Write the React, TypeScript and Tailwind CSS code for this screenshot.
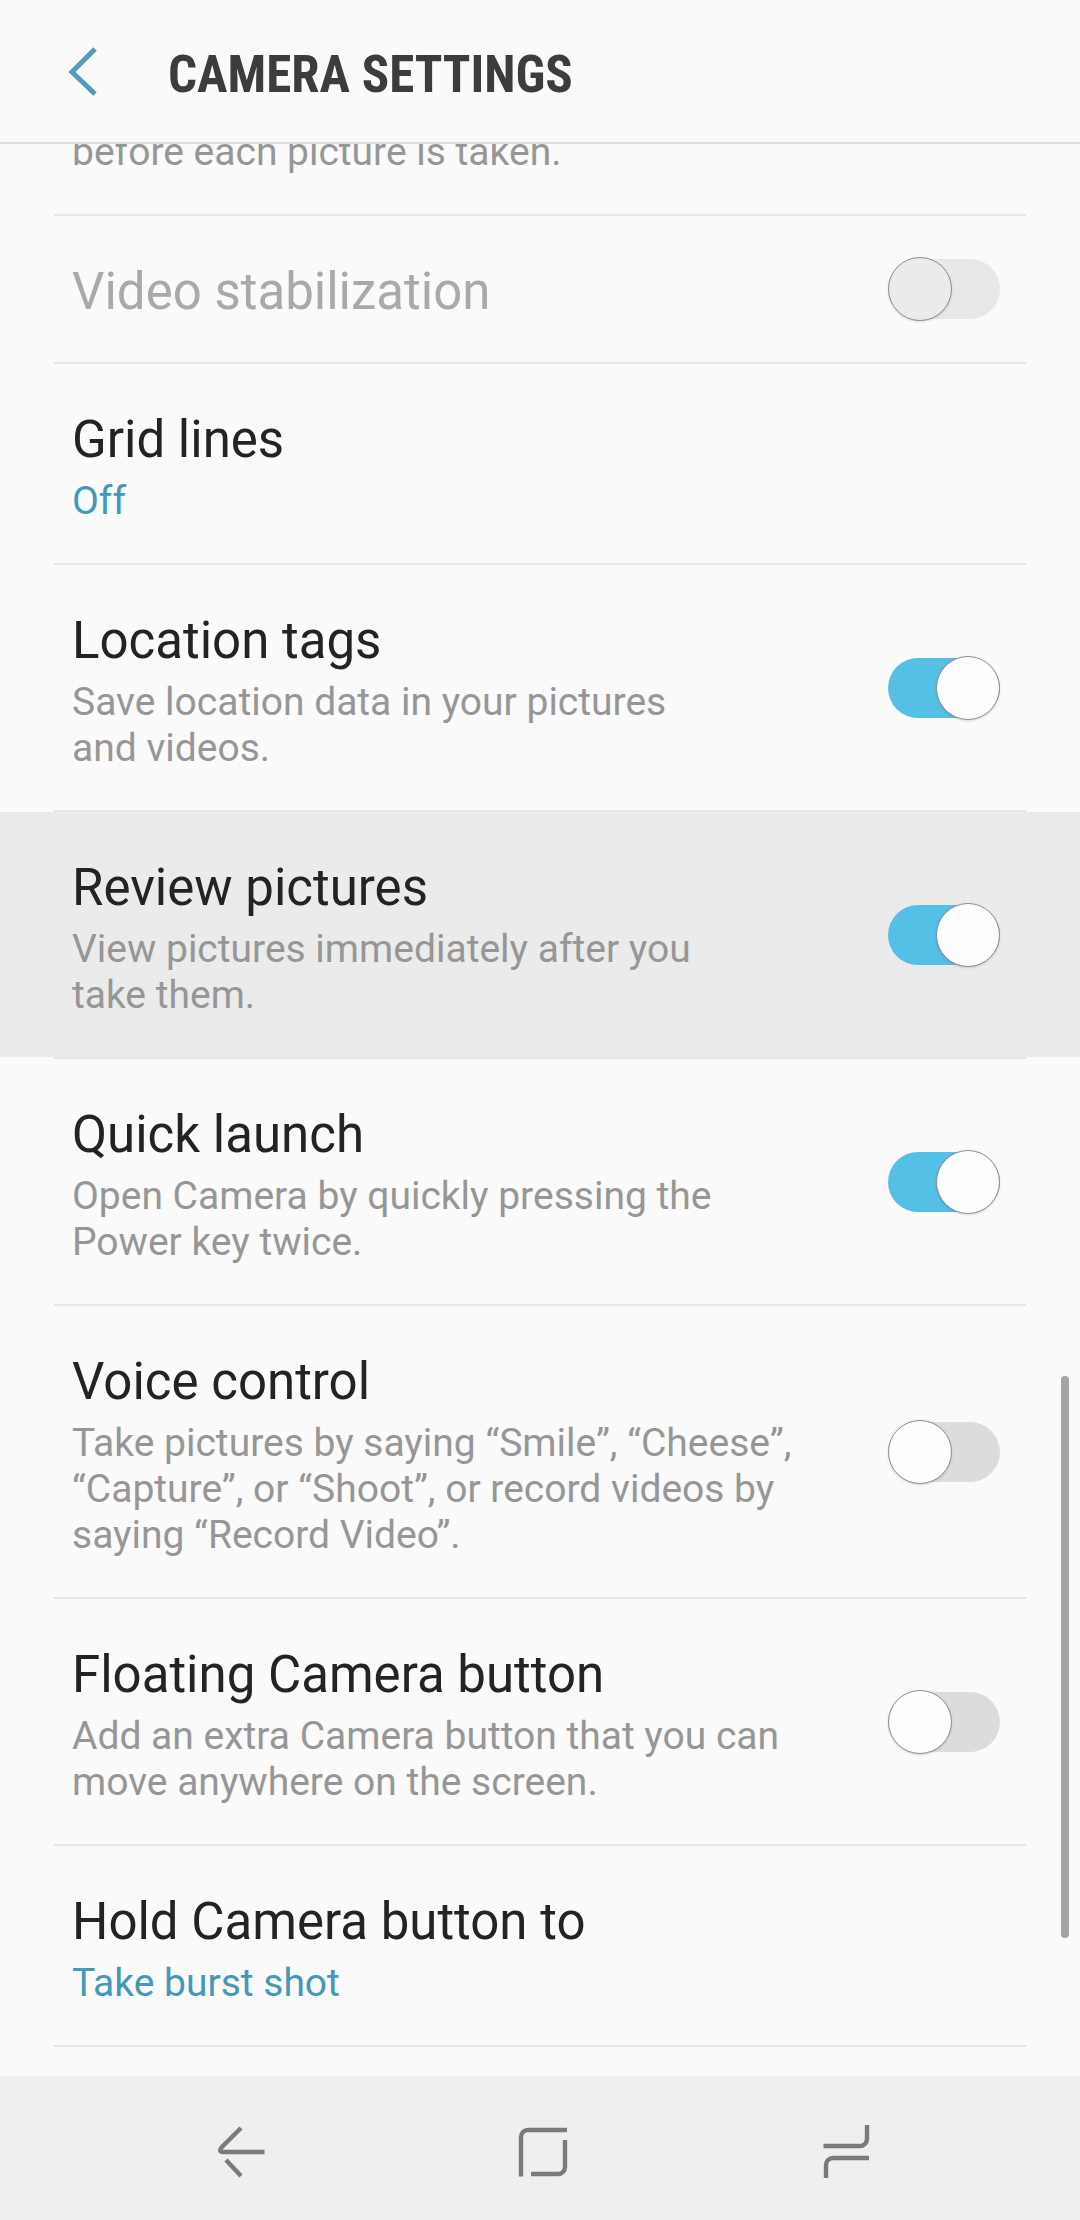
import clsx from 'clsx'
import type { ReactNode } from 'react'

interface Setting {
  id: string
  title: string
  description?: string
  value?: string
  checked?: boolean
  disabled?: boolean
  active?: boolean
  narrow?: boolean
}

const settings: Setting[] = [
  { id: 'stabilization', title: 'Video stabilization', checked: false, disabled: true },
  { id: 'grid', title: 'Grid lines', value: 'Off' },
  {
    id: 'location',
    title: 'Location tags',
    description: 'Save location data in your pictures and videos.',
    checked: true,
    narrow: true,
  },
  {
    id: 'review',
    title: 'Review pictures',
    description: 'View pictures immediately after you take them.',
    checked: true,
    active: true,
    narrow: true,
  },
  {
    id: 'quick',
    title: 'Quick launch',
    description: 'Open Camera by quickly pressing the Power key twice.',
    checked: true,
  },
  {
    id: 'voice',
    title: 'Voice control',
    description:
      'Take pictures by saying “Smile”, “Cheese”, “Capture”, or “Shoot”, or record videos by saying “Record Video”.',
    checked: false,
  },
  {
    id: 'floating',
    title: 'Floating Camera button',
    description: 'Add an extra Camera button that you can move anywhere on the screen.',
    checked: false,
  },
  { id: 'hold', title: 'Hold Camera button to', value: 'Take burst shot' },
]

function Toggle({ id, checked, disabled }: { id: string; checked: boolean; disabled?: boolean }) {
  return (
    <span className="relative flex h-15 w-28 shrink-0">
      <input
        id={id}
        type="checkbox"
        role="switch"
        defaultChecked={checked}
        disabled={disabled}
        className="peer size-full appearance-none rounded-full bg-[#dcdcdc] checked:bg-[#55c0e6] disabled:bg-[#e8e8e8]"
      />
      {/* thumb, slightly taller than the track */}
      <span className="pointer-events-none absolute -top-0.5 left-0 size-16 rounded-full border border-[#8f8f8f] bg-[#fdfdfd] shadow-sm peer-checked:right-0 peer-checked:left-auto peer-disabled:bg-[#ebebeb]" />
    </span>
  )
}

function Divider() {
  return <div className="mx-[54px] h-0.5 bg-[#e6e6e6]" />
}

function SettingRow({ setting }: { setting: Setting }) {
  const { id, title, description, value, checked, disabled, active, narrow } = setting

  const text = (
    <>
      <span className={clsx('block text-[51px] leading-[62px]', disabled ? 'text-[#a9a9a9]' : 'text-[#232323]')}>
        {title}
      </span>
      {description && (
        <span className="mt-[7px] block text-[39px] leading-[46px] text-[#969696]">{description}</span>
      )}
      {value && <span className="mt-[7px] block text-[39px] leading-[46px] text-[#4598b8]">{value}</span>}
    </>
  )

  return (
    <li>
      <div className={clsx('flex items-center justify-between pr-20 pl-[72px]', active && 'bg-[#ebebeb]')}>
        {checked === undefined ? (
          <button type="button" className="w-full pt-[45px] pb-[39px] text-left">
            {text}
          </button>
        ) : (
          <>
            <label htmlFor={id} className={clsx('pt-[45px] pb-[39px]', narrow ? 'max-w-[650px]' : 'max-w-[730px]')}>
              {text}
            </label>
            <Toggle id={id} checked={checked} disabled={disabled} />
          </>
        )}
      </div>
      <Divider />
    </li>
  )
}

function NavButton({ label, children }: { label: string; children: ReactNode }) {
  return (
    <button type="button" aria-label={label} className="flex flex-1 items-center justify-center">
      <svg viewBox="0 0 64 64" className="size-16" fill="none" stroke="#7a7a7a" strokeWidth="4.400">
        {children}
      </svg>
    </button>
  )
}

export default function App() {
  return (
    <div className="flex h-screen flex-col overflow-hidden bg-[#fafafa] font-['Roboto',sans-serif]">
      <header className="flex h-36 shrink-0 items-center border-b-2 border-[#e0e0e0] px-[60px]">
        <button type="button" aria-label="Back" className="w-[108px]">
          <svg viewBox="0 0 44 50" className="h-[50px] w-[44px]" fill="none" stroke="#4f9dba" strokeWidth="5">
            <path d="M35 3 12 26l23 22" />
          </svg>
        </button>
        <h1 className="pt-2 font-['Roboto_Condensed',Roboto,sans-serif] text-[51px] leading-[60px] font-bold text-[#3c3c3c]">
          CAMERA SETTINGS
        </h1>
      </header>

      <main className="relative flex min-h-0 flex-1 flex-col justify-end overflow-hidden pb-[29px]">
        <ul>
          <li>
            <p className="px-[72px] pb-[39px] text-[39px] leading-[46px] text-[#969696]">
              before each picture is taken.
            </p>
            <Divider />
          </li>
          {settings.map((setting) => (
            <SettingRow key={setting.id} setting={setting} />
          ))}
        </ul>
        {/* scroll indicator */}
        <div className="absolute right-[11px] bottom-[138px] h-[562px] w-2 rounded-full bg-[#a4a4a4]" />
      </main>

      <nav className="flex h-36 shrink-0 bg-[#efefef] px-[87px]">
        <NavButton label="Back">
          <path d="M35 12 15.500 31.500Q12 36 17.500 36H58.500M20 44l15 16" />
        </NavButton>
        <NavButton label="Home">
          <path d="M13 60.500V21a7 7 0 0 1 7-7h39M57 24v27a7 7 0 0 1-7 7H23" />
        </NavButton>
        <NavButton label="Recents">
          <path d="M57 9v14a7 7 0 0 1-7 7H13.500M59 42H23a7 7 0 0 0-7 7v13" />
        </NavButton>
      </nav>
    </div>
  )
}
